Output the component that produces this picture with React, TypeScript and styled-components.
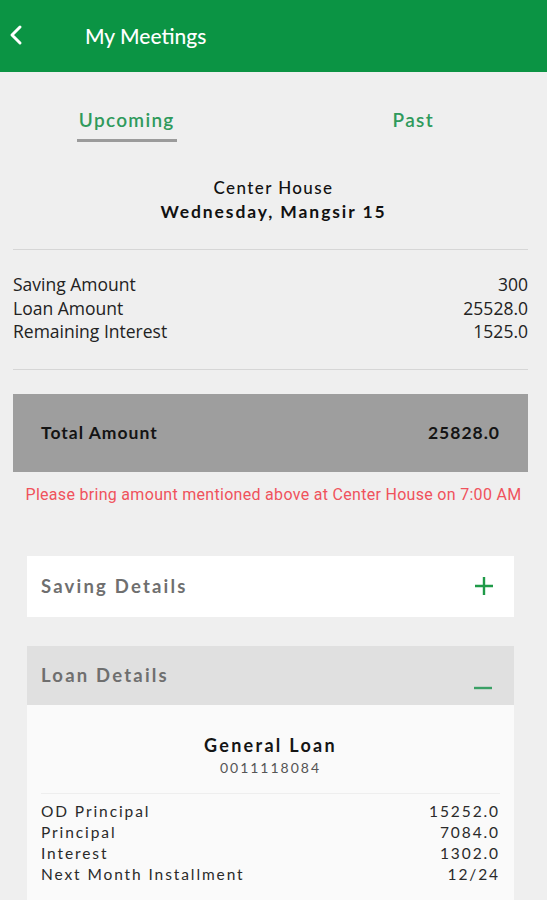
import styled, {createGlobalStyle} from 'styled-components'

const GlobalStyle = createGlobalStyle`
  html, body {
    margin: 0;
    padding: 0;
    background: #efefef;
    font-family: Lato, "Noto Sans", sans-serif;
  }
`

const summary = [
  {label: 'Saving Amount', value: '300'},
  {label: 'Loan Amount', value: '25528.0'},
  {label: 'Remaining Interest', value: '1525.0'},
]

const loanRows = [
  {label: 'OD Principal', value: '15252.0'},
  {label: 'Principal', value: '7084.0'},
  {label: 'Interest', value: '1302.0'},
  {label: 'Next Month Installment', value: '12/24'},
]

export default function App() {
  return (
    <Page>
      <GlobalStyle />
      <AppBar>
        <BackButton>
          <svg width="14" height="22" viewBox="0 0 14 22">
            <path d="M11 3 L3 11 L11 19" fill="none" stroke="#fff" strokeWidth="3" strokeLinecap="round" strokeLinejoin="round" />
          </svg>
        </BackButton>
        <Title>My Meetings</Title>
      </AppBar>

      <Tabs>
        <Tab $active>Upcoming</Tab>
        <Tab>Past</Tab>
      </Tabs>

      <Meeting>
        <Place>Center House</Place>
        <When>Wednesday, Mangsir 15</When>
      </Meeting>

      <Divider />

      <SummaryList>
        {summary.map(row => (
          <SummaryRow key={row.label}>
            <span>{row.label}</span>
            <span>{row.value}</span>
          </SummaryRow>
        ))}
      </SummaryList>

      <Divider />

      <TotalBox>
        <span>Total Amount</span>
        <span>25828.0</span>
      </TotalBox>

      <Notice>Please bring amount mentioned above at Center House on 7:00 AM</Notice>

      <Sections>
        <SectionHeader>
          <SectionTitle>Saving Details</SectionTitle>
          <svg width="22" height="22" viewBox="0 0 22 22">
            <path d="M11 2 V20 M2 11 H20" stroke="#1f9a48" strokeWidth="2.4" />
          </svg>
        </SectionHeader>

        <LoanCard>
          <SectionHeader $open>
            <SectionTitle>Loan Details</SectionTitle>
            <MinusIcon width="18" height="4" viewBox="0 0 18 4">
              <path d="M0 2 H18" stroke="#3aa065" strokeWidth="2.4" />
            </MinusIcon>
          </SectionHeader>
          <LoanBody>
            <LoanName>General Loan</LoanName>
            <LoanNumber>0011118084</LoanNumber>
            <FaintDivider />
            {loanRows.map(row => (
              <LoanRow key={row.label}>
                <span>{row.label}</span>
                <span>{row.value}</span>
              </LoanRow>
            ))}
          </LoanBody>
        </LoanCard>
      </Sections>
    </Page>
  )
}

const Page = styled.div`
  width: 547px;
  min-height: 900px;
  background: #efefef;
  overflow: hidden;
`

const AppBar = styled.header`
  height: 72px;
  background: #0b9444;
  display: flex;
  align-items: center;
  padding-left: 9px;
  box-sizing: border-box;
`

const BackButton = styled.div`
  width: 16px;
  height: 22px;
  display: flex;
  align-items: center;
  margin-top: -2px;
`

const Title = styled.h1`
  margin: -2px 0 0 60px;
  color: #fff;
  font-size: 21px;
  font-weight: 500;
`

const Tabs = styled.div`
  display: grid;
  grid-template-columns: 1fr 1fr;
  margin-top: 36px;
  height: 34px;
`

const Tab = styled.div<{$active?: boolean}>`
  justify-self: center;
  color: #2f9a5c;
  font-size: 19px;
  font-weight: 600;
  letter-spacing: 1.3px;
  padding: 0 2px 7px;
  margin-left: ${p => (p.$active ? '-20px' : '6px')};
  border-bottom: ${p => (p.$active ? '3px solid #9b9b9b' : '3px solid transparent')};
  height: 24px;
`

const Meeting = styled.div`
  display: flex;
  flex-direction: column;
  align-items: center;
  margin-top: 34px;
  color: #111;
  font-size: 17px;
  line-height: 24px;
`

const Place = styled.div`
  font-weight: 500;
  letter-spacing: 1.4px;
`

const When = styled.div`
  font-weight: 700;
  font-size: 17.5px;
  letter-spacing: 1.9px;
`

const Divider = styled.hr`
  margin: 25px 19px 0 13px;
  border: 0;
  border-top: 1.5px solid #d6d6d6;
`

const SummaryList = styled.div`
  margin: 23px 19px 0 13px;
  color: #222;
  font-family: "Open Sans", "Noto Sans", sans-serif;
  font-size: 17.5px;
  line-height: 23.5px;
  letter-spacing: 0;
`

const SummaryRow = styled.div`
  display: flex;
  justify-content: space-between;
`

const TotalBox = styled.div`
  margin: 24px 19px 0 13px;
  height: 78px;
  background: #9e9e9e;
  display: flex;
  align-items: center;
  justify-content: space-between;
  padding: 0 28px;
  box-sizing: border-box;
  color: #141414;
  font-size: 17.5px;
  font-weight: 700;
  letter-spacing: 1px;
`

const Notice = styled.p`
  margin: 13px 0 0;
  text-align: center;
  color: #f0525c;
  font-family: Roboto, "Liberation Sans", sans-serif;
  font-size: 16px;
  letter-spacing: 0.3px;
  line-height: 20px;
`

const Sections = styled.div`
  margin: 51px 33px 0 27px;
  display: flex;
  flex-direction: column;
  gap: 29px;
`

const SectionHeader = styled.div<{$open?: boolean}>`
  height: ${p => (p.$open ? '59px' : '61px')};
  background: ${p => (p.$open ? '#e0e0e0' : '#fff')};
  display: flex;
  align-items: center;
  justify-content: space-between;
  padding: 0 19px 0 14px;
  box-sizing: border-box;
`

const SectionTitle = styled.div`
  color: #6f6f6f;
  font-size: 18.5px;
  font-weight: 700;
  letter-spacing: 2.2px;
`

const MinusIcon = styled.svg`
  margin-top: 26px;
  margin-right: 3px;
`

const LoanCard = styled.div`
  display: flex;
  flex-direction: column;
`

const LoanBody = styled.div`
  background: #fafafa;
  padding: 28px 14px 40px;
  display: flex;
  flex-direction: column;
`

const LoanName = styled.div`
  text-align: center;
  color: #151515;
  font-size: 18px;
  font-weight: 700;
  letter-spacing: 2.3px;
  line-height: 24px;
`

const LoanNumber = styled.div`
  text-align: center;
  color: #555;
  font-size: 14px;
  letter-spacing: 2px;
  line-height: 22px;
`

const FaintDivider = styled.div`
  height: 1px;
  background: #eeeeee;
  margin: 14px 0 7px;
`

const LoanRow = styled.div`
  display: flex;
  justify-content: space-between;
  color: #2a2a2a;
  font-size: 15.5px;
  letter-spacing: 1.9px;
  line-height: 21px;
`
